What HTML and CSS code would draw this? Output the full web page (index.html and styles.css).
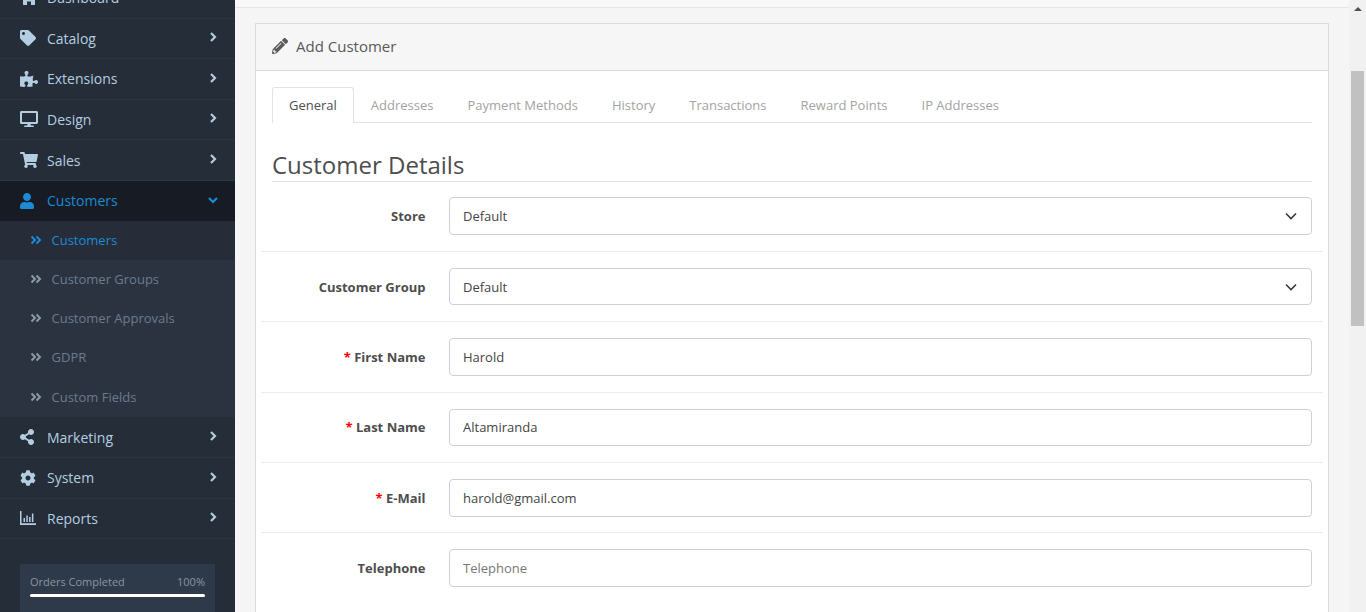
FILE: index.html
```html
<!DOCTYPE html>
<html lang="en">
  <head>
    <meta charset="UTF-8" />
    <meta name="viewport" content="width=device-width, initial-scale=1.0" />
    <title>Add Customer</title>
    <link rel="stylesheet" href="styles.css">
  </head>
  <body>
    <div class="app">
      <aside class="sidebar">
        <ul class="menu">
          <li class="menu-item">
            <svg class="menu-icon" viewBox="0 0 576 512" preserveAspectRatio="xMinYMid"><path d="M280 148 96 300v164c0 9 7 16 16 16h112V368h128v112h112c9 0 16-7 16-16V300z"/></svg>
            <span class="menu-label">Dashboard</span>
          </li>
          <li class="menu-item">
            <svg class="menu-icon" viewBox="0 0 512 512" preserveAspectRatio="xMinYMid"><path d="M0 252.118V48C0 21.49 21.49 0 48 0h204.118a48 48 0 0 1 33.941 14.059l211.882 211.882c18.745 18.745 18.745 49.137 0 67.882L293.823 497.941c-18.745 18.745-49.137 18.745-67.882 0L14.059 286.059A48 48 0 0 1 0 252.118zM112 64c-26.51 0-48 21.49-48 48s21.49 48 48 48 48-21.49 48-48-21.49-48-48-48z"/></svg>
            <span class="menu-label">Catalog</span>
            <svg class="menu-arrow" viewBox="0 0 10 10"><path d="M3 1l4 4-4 4"/></svg>
          </li>
          <li class="menu-item">
            <svg class="menu-icon" viewBox="0 0 576 512" preserveAspectRatio="xMinYMid"><path d="M519.442 288.651c-41.519 0-59.5 31.593-82.058 31.593C377.409 320.244 432 144 432 144s-196.288 80-196.288-3.297c0-35.827 36.288-46.25 36.288-85.985C272 19.216 243.885 0 210.539 0c-34.654 0-66.366 18.891-66.366 56.346 0 41.364 31.711 59.277 31.711 81.75C175.885 207.719 0 166.758 0 166.758v333.237s178.635 41.047 178.635-28.662c0-22.473-40-40.107-40-81.471 0-37.456 29.25-56.346 63.577-56.346 33.673 0 61.788 19.216 61.788 54.717 0 39.735-36.288 50.158-36.288 85.985 0 60.803 129.675 25.73 181.23 25.73 0 0-34.725-120.101 25.827-120.101 35.962 0 46.423 36.152 86.308 36.152C556.712 416 576 387.99 576 354.443c0-34.199-18.962-65.792-56.558-65.792z"/></svg>
            <span class="menu-label">Extensions</span>
            <svg class="menu-arrow" viewBox="0 0 10 10"><path d="M3 1l4 4-4 4"/></svg>
          </li>
          <li class="menu-item">
            <svg class="menu-icon" viewBox="0 0 576 512" preserveAspectRatio="xMinYMid"><path d="M528 0H48C21.5 0 0 21.5 0 48v320c0 26.5 21.5 48 48 48h192l-16 48h-72c-13.3 0-24 10.7-24 24s10.7 24 24 24h272c13.3 0 24-10.7 24-24s-10.7-24-24-24h-72l-16-48h192c26.5 0 48-21.5 48-48V48c0-26.5-21.5-48-48-48zm-16 352H64V64h448v288z"/></svg>
            <span class="menu-label">Design</span>
            <svg class="menu-arrow" viewBox="0 0 10 10"><path d="M3 1l4 4-4 4"/></svg>
          </li>
          <li class="menu-item">
            <svg class="menu-icon" viewBox="0 0 576 512" preserveAspectRatio="xMinYMid"><path d="M528.12 301.319l47.273-208C578.806 78.301 567.391 64 551.99 64H159.208l-9.166-44.81C147.758 8.021 137.93 0 126.529 0H24C10.745 0 0 10.745 0 24v16c0 13.255 10.745 24 24 24h69.883l70.248 343.435C147.325 417.1 136 435.222 136 456c0 30.928 25.072 56 56 56s56-25.072 56-56c0-15.674-6.447-29.835-16.824-40h209.647C430.447 426.165 424 440.326 424 456c0 30.928 25.072 56 56 56s56-25.072 56-56c0-22.172-12.888-41.332-31.579-50.405l5.517-24.276c3.413-15.018-8.002-29.319-23.403-29.319H218.117l-6.545-32h293.145c11.206 0 20.92-7.754 23.403-18.681z"/></svg>
            <span class="menu-label">Sales</span>
            <svg class="menu-arrow" viewBox="0 0 10 10"><path d="M3 1l4 4-4 4"/></svg>
          </li>
          <li class="menu-item active">
            <svg class="menu-icon" viewBox="0 0 448 512" preserveAspectRatio="xMinYMid"><path d="M224 256c70.7 0 128-57.3 128-128S294.7 0 224 0 96 57.3 96 128s57.3 128 128 128zm89.6 32h-16.7c-22.2 10.2-46.9 16-72.9 16s-50.6-5.8-72.9-16h-16.7C60.2 288 0 348.2 0 422.4V464c0 26.5 21.5 48 48 48h352c26.5 0 48-21.5 48-48v-41.6c0-74.2-60.2-134.4-134.4-134.4z"/></svg>
            <span class="menu-label">Customers</span>
            <svg class="menu-arrow" viewBox="0 0 10 10"><path d="M1 3l4 4 4-4"/></svg>
          </li>
          <li>
            <ul class="submenu">
              <li class="submenu-item active">
                <svg class="submenu-icon" viewBox="0 0 12 10"><path d="M1.5 1.5 5 5 1.5 8.500M6.500 1.500 10 5 6.500 8.500"/></svg>
                Customers
              </li>
              <li class="submenu-item">
                <svg class="submenu-icon" viewBox="0 0 12 10"><path d="M1.5 1.5 5 5 1.5 8.500M6.500 1.500 10 5 6.500 8.500"/></svg>
                Customer Groups
              </li>
              <li class="submenu-item">
                <svg class="submenu-icon" viewBox="0 0 12 10"><path d="M1.5 1.5 5 5 1.5 8.500M6.500 1.500 10 5 6.500 8.500"/></svg>
                Customer Approvals
              </li>
              <li class="submenu-item">
                <svg class="submenu-icon" viewBox="0 0 12 10"><path d="M1.5 1.5 5 5 1.5 8.500M6.500 1.500 10 5 6.500 8.500"/></svg>
                GDPR
              </li>
              <li class="submenu-item">
                <svg class="submenu-icon" viewBox="0 0 12 10"><path d="M1.5 1.5 5 5 1.5 8.500M6.500 1.500 10 5 6.500 8.500"/></svg>
                Custom Fields
              </li>
            </ul>
          </li>
          <li class="menu-item">
            <svg class="menu-icon" viewBox="0 0 448 512" preserveAspectRatio="xMinYMid"><path d="M352 320c-22.608 0-43.387 7.819-59.79 20.895l-102.486-64.054a96.551 96.551 0 0 0 0-41.683l102.486-64.054C308.613 184.181 329.392 192 352 192c53.019 0 96-42.981 96-96S405.019 0 352 0s-96 42.981-96 96c0 7.158.79 14.13 2.276 20.841L155.79 180.895C139.387 167.819 118.608 160 96 160c-53.019 0-96 42.981-96 96s42.981 96 96 96c22.608 0 43.387-7.819 59.79-20.895l102.486 64.054A96.301 96.301 0 0 0 256 416c0 53.019 42.981 96 96 96s96-42.981 96-96-42.981-96-96-96z"/></svg>
            <span class="menu-label">Marketing</span>
            <svg class="menu-arrow" viewBox="0 0 10 10"><path d="M3 1l4 4-4 4"/></svg>
          </li>
          <li class="menu-item">
            <svg class="menu-icon" viewBox="0 0 512 512" preserveAspectRatio="xMinYMid"><path d="M487.4 315.7l-42.6-24.6c4.3-23.2 4.3-47 0-70.2l42.6-24.6c4.9-2.8 7.1-8.6 5.500-14-11.100-35.600-30-67.800-54.700-94.600-3.800-4.100-10-5.100-14.800-2.300L380.800 110c-17.900-15.400-38.500-27.300-60.800-35.100V25.800c0-5.600-3.900-10.500-9.400-11.700-36.700-8.200-74.300-7.800-109.200 0-5.500 1.200-9.400 6.100-9.400 11.700V75c-22.200 7.900-42.800 19.800-60.800 35.100L88.700 85.500c-4.900-2.800-11-1.900-14.800 2.300-24.700 26.700-43.600 58.900-54.700 94.600-1.700 5.400.6 11.200 5.500 14L67.300 221c-4.300 23.200-4.300 47 0 70.200l-42.600 24.600c-4.900 2.800-7.100 8.600-5.500 14 11.100 35.600 30 67.800 54.700 94.600 3.800 4.100 10 5.100 14.800 2.300l42.600-24.600c17.900 15.400 38.500 27.300 60.800 35.100v49.200c0 5.600 3.900 10.500 9.400 11.700 36.700 8.200 74.300 7.800 109.200 0 5.500-1.200 9.400-6.100 9.400-11.700v-49.200c22.200-7.900 42.800-19.800 60.800-35.100l42.600 24.600c4.900 2.800 11 1.900 14.800-2.300 24.700-26.700 43.600-58.900 54.700-94.600 1.500-5.500-.7-11.300-5.600-14.100zM256 336c-44.100 0-80-35.900-80-80s35.900-80 80-80 80 35.900 80 80-35.900 80-80 80z"/></svg>
            <span class="menu-label">System</span>
            <svg class="menu-arrow" viewBox="0 0 10 10"><path d="M3 1l4 4-4 4"/></svg>
          </li>
          <li class="menu-item">
            <svg class="menu-icon" viewBox="0 0 18 14" preserveAspectRatio="xMinYMid"><path d="M0 0h1.500v12.300H16V14H0zM3.500 7H5v4H3.500zM6.300 4.500h1.500V11H6.300zM9.100 6h1.500v5H9.100zM11.900 2.500h1.500V11h-1.500z"/></svg>
            <span class="menu-label">Reports</span>
            <svg class="menu-arrow" viewBox="0 0 10 10"><path d="M3 1l4 4-4 4"/></svg>
          </li>
        </ul>
        <div class="progress-box">
          <div class="progress-text"><span>Orders Completed</span><span>100%</span></div>
          <div class="progress-bar"></div>
        </div>
      </aside>

      <main class="main">
        <div class="topbar"></div>
        <section class="panel">
          <header class="panel-heading">
            <svg class="panel-icon" viewBox="0 0 512 512"><path d="M497.900 142.100l-46.100 46.100c-4.700 4.700-12.300 4.700-17 0l-111-111c-4.700-4.700-4.700-12.300 0-17l46.100-46.100c18.700-18.700 49.100-18.700 67.900 0l60.100 60.100c18.800 18.700 18.800 49.100 0 67.900zM284.200 99.800 21.600 362.400.4 483.900c-2.900 16.400 11.400 30.600 27.800 27.800l121.500-21.300 262.600-262.600c4.700-4.700 4.700-12.300 0-17l-111-111c-4.800-4.700-12.400-4.700-17.100 0zM124.100 339.900c-5.500-5.500-5.500-14.300 0-19.800l154-154c5.500-5.500 14.300-5.500 19.800 0s5.500 14.300 0 19.800l-154 154c-5.500 5.500-14.300 5.500-19.800 0zM88 424h48v36.300l-64.500 11.300-31.100-31.100L51.700 376H88z"/></svg>
            <h3 class="panel-title">Add Customer</h3>
          </header>
          <div class="panel-body">
            <ul class="tabs">
              <li class="tab active">General</li>
              <li class="tab">Addresses</li>
              <li class="tab">Payment Methods</li>
              <li class="tab">History</li>
              <li class="tab">Transactions</li>
              <li class="tab">Reward Points</li>
              <li class="tab">IP Addresses</li>
            </ul>
            <h2 class="section-title">Customer Details</h2>
            <form class="form">
              <div class="form-row">
                <label class="form-label">Store</label>
                <div class="select-wrap">
                  <select class="form-control"><option>Default</option></select>
                  <svg class="select-arrow" viewBox="0 0 12 8"><path d="M1 1.500 6 6.500l5-5"/></svg>
                </div>
              </div>
              <div class="form-row">
                <label class="form-label">Customer Group</label>
                <div class="select-wrap">
                  <select class="form-control"><option>Default</option></select>
                  <svg class="select-arrow" viewBox="0 0 12 8"><path d="M1 1.500 6 6.500l5-5"/></svg>
                </div>
              </div>
              <div class="form-row">
                <label class="form-label required">First Name</label>
                <input class="form-control" type="text" value="Harold" placeholder="First Name">
              </div>
              <div class="form-row">
                <label class="form-label required">Last Name</label>
                <input class="form-control" type="text" value="Altamiranda" placeholder="Last Name">
              </div>
              <div class="form-row">
                <label class="form-label required">E-Mail</label>
                <input class="form-control" type="text" value="harold@gmail.com" placeholder="E-Mail">
              </div>
              <div class="form-row">
                <label class="form-label">Telephone</label>
                <input class="form-control" type="text" placeholder="Telephone">
              </div>
            </form>
          </div>
        </section>
      </main>

      <div class="scrollbar">
        <div class="scroll-up"></div>
        <div class="scroll-thumb"></div>
      </div>
    </div>
  </body>
</html>
```

FILE: styles.css
```css
* {
  margin: 0;
  padding: 0;
  box-sizing: border-box;
}

body {
  font-family: "Open Sans", sans-serif;
  font-size: 13px;
  color: #4d4d4d;
  background: #f5f5f5;
  overflow: hidden;
}

ul {
  list-style: none;
}

.app {
  display: flex;
  height: 100vh;
  overflow: hidden;
}

/* sidebar */
.sidebar {
  flex: 0 0 235px;
  background: #252d38;
  overflow: hidden;
}

.menu {
  margin-top: -22.1px;
}

.menu-item {
  display: flex;
  align-items: center;
  height: 40.6px;
  padding: 0 17px 0 20px;
  font-size: 14px;
  color: #b4cde0;
  border-bottom: 1px solid #2b3641;
}

.menu-item.active {
  background: #171b24;
  color: #1b8bd6;
  border-bottom-color: #171b24;
}

.menu-icon {
  flex: 0 0 18px;
  width: 18px;
  height: 16px;
  margin-right: 9px;
  fill: currentColor;
}

.menu-label {
  flex: 1;
}

.menu-arrow {
  width: 10px;
  height: 10px;
  margin-bottom: 2px;
  fill: none;
  stroke: currentColor;
  stroke-width: 2.2;
}

.submenu {
  margin: -0.5px 0 0.5px;
  background: #2b3341;
}

.submenu-item {
  display: flex;
  align-items: center;
  height: 39.2px;
  padding: 0 0 1.4px 30px;
  color: #6b7b8d;
}

.submenu-item.active {
  background: #262d39;
  color: #1b8bd6;
}

.submenu-icon {
  width: 12px;
  height: 10px;
  margin-right: 9.5px;
  fill: none;
  stroke: #8b99a8;
  stroke-width: 2;
}

.submenu-item.active .submenu-icon {
  stroke: #1b8bd6;
}

.progress-box {
  margin: 25px 20px 0;
  padding: 10px;
  height: 80px;
  background: #2e3a49;
}

.progress-text {
  display: flex;
  justify-content: space-between;
  font-size: 11px;
  line-height: 16px;
  color: #8a96a3;
}

.progress-bar {
  height: 3px;
  margin-top: 4px;
  background: #fff;
  border-radius: 2px;
}

/* content */
.main {
  flex: 1;
  min-width: 0;
  background: #f5f5f5;
}

.topbar {
  height: 8px;
  background: #f8f8f8;
  border-bottom: 1px solid #e6e6e6;
}

.panel {
  margin: 15px 20px 0;
  background: #fff;
  border: 1px solid #dbdbdb;
}

.panel-heading {
  display: flex;
  align-items: center;
  height: 47px;
  padding: 0 16px 2px;
  background: #f6f6f6;
  border-bottom: 1px solid #dbdbdb;
}

.panel-icon {
  width: 16px;
  height: 16px;
  margin-right: 8px;
  fill: #595959;
}

.panel-title {
  font-size: 15px;
  font-weight: 400;
  color: #595959;
}

.panel-body {
  padding: 16px 16px 60px;
}

.tabs {
  display: flex;
  height: 36px;
  border-bottom: 1px solid #e3e3e3;
}

.tab {
  height: 36px;
  padding: 0 17px;
  line-height: 36px;
  color: #a3a3a3;
}

.tab.active {
  color: #4d4d4d;
  background: #fff;
  border: 1px solid #e3e3e3;
  border-bottom: 0;
  border-radius: 3px 3px 0 0;
  padding: 0 16px;
  line-height: 35px;
}

.section-title {
  margin-top: 25px;
  height: 34px;
  font-size: 24px;
  font-weight: 400;
  line-height: 34px;
  color: #4d4d4d;
  border-bottom: 1px solid #e3e3e3;
}

.form {
  margin: 0 -11px;
}

.form-row {
  display: grid;
  grid-template-columns: 164.5px 1fr;
  column-gap: 23.5px;
  align-items: center;
  padding: 15.9px 11px 15.9px 0;
  border-top: 1px solid #ececec;
}

.form-row:first-child {
  padding: 15px 11px 16.3px 0;
  border-top: 0;
}

.form-label {
  text-align: right;
  font-weight: 700;
  color: #4d4d4d;
}

.form-label.required::before {
  content: "* ";
  color: #f00;
}

.form-control {
  display: block;
  width: 100%;
  height: 37.6px;
  padding: 0 13px;
  font-family: inherit;
  font-size: 13px;
  color: #444;
  background: #fff;
  border: 1px solid #ccd0d8;
  border-radius: 4px;
  outline: 0;
  appearance: none;
}

.form-control::placeholder {
  color: #777;
}

.select-wrap {
  position: relative;
}

.select-arrow {
  position: absolute;
  top: 15px;
  right: 15px;
  width: 12px;
  height: 8px;
  fill: none;
  stroke: #343a40;
  stroke-width: 1.6;
}

/* fake window scrollbar, the page is scrolled down a bit */
.scrollbar {
  flex: 0 0 17px;
  padding: 0 2px;
  background: #f1f1f1;
}

.scroll-up {
  width: 0;
  height: 0;
  margin: 7px auto 0;
  border: 4px solid transparent;
  border-top: 0;
  border-bottom-color: #505050;
}

.scroll-thumb {
  height: 255px;
  margin-top: 60px;
  background: #c1c1c1;
}
```
